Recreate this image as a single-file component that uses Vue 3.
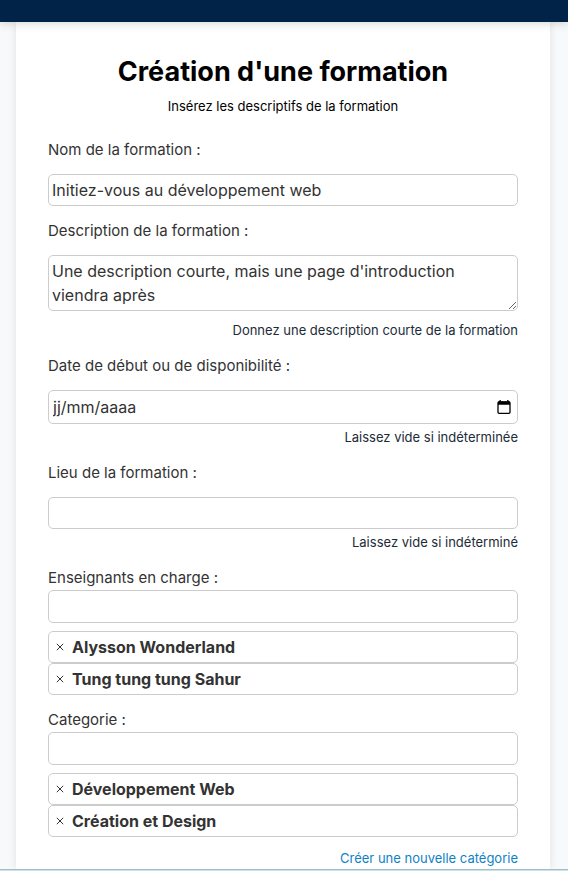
<script setup>
import { ref } from 'vue'

const name = ref('Initiez-vous au développement web')
const description = ref("Une description courte, mais une page d'introduction viendra après")
const date = ref('')
const place = ref('')

const pickers = ref([
  { id: 'teachers', label: 'Enseignants en charge :', query: '', items: ['Alysson Wonderland', 'Tung tung tung Sahur'] },
  { id: 'categories', label: 'Categorie :', query: '', items: ['Développement Web', 'Création et Design'] },
])
</script>

<template>
  <div class="page">
    <header class="topbar"></header>
    <main class="main">
      <form class="card" @submit.prevent>
        <h1>Création d'une formation</h1>
        <p class="intro">Insérez les descriptifs de la formation</p>

        <div class="field">
          <label for="name">Nom de la formation :</label>
          <input id="name" v-model="name" class="control" type="text" />
        </div>

        <div class="field described">
          <label for="description">Description de la formation :</label>
          <textarea id="description" v-model="description" class="control" rows="2"></textarea>
          <p class="hint spaced">Donnez une description courte de la formation</p>
        </div>

        <div class="field described">
          <label for="date">Date de début ou de disponibilité :</label>
          <div class="control date">
            <input id="date" v-model="date" type="text" placeholder="jj/mm/aaaa" />
            <button type="button" aria-label="Ouvrir le calendrier">
              <svg viewBox="0 0 14 14" width="14" height="14">
                <rect x="1" y="2" width="12" height="11.300" rx="1" fill="none" stroke="#000" stroke-width="1.300" />
                <path d="M1 1.500h12v3.300H1zM2.500 0h1.300v2H2.500zM10.200 0h1.300v2h-1.300z" fill="#000" />
              </svg>
            </button>
          </div>
          <p class="hint">Laissez vide si indéterminée</p>
        </div>

        <div class="field described">
          <label for="place">Lieu de la formation :</label>
          <input id="place" v-model="place" class="control" type="text" />
          <p class="hint">Laissez vide si indéterminé</p>
        </div>

        <div v-for="picker in pickers" :key="picker.id" class="field picker">
          <label :for="picker.id">{{ picker.label }}</label>
          <input :id="picker.id" v-model="picker.query" class="control search" type="text" />
          <ul>
            <li v-for="(item, i) in picker.items" :key="item" class="control">
              <button type="button" :aria-label="'Retirer ' + item" @click="picker.items.splice(i, 1)">
                <svg viewBox="0 0 8 8" width="8" height="8">
                  <path d="M.8.800l6.400 6.400M7.200.8L.8 7.200" stroke="#333" stroke-width="1" />
                </svg>
              </button>
              <strong>{{ item }}</strong>
            </li>
          </ul>
        </div>

        <a class="create" href="#">Créer une nouvelle catégorie</a>
      </form>
    </main>
    <footer class="bottom"></footer>
  </div>
</template>

<style>
body {
  margin: 0;
  background: #f8f9fb;
}
</style>

<style scoped>
.page {
  display: flex;
  flex-direction: column;
  min-height: 100vh;
  font-family: Inter, "Liberation Sans", sans-serif;
  font-size: 16px;
  line-height: 24px;
  color: #333;
}
.topbar {
  position: relative;
  z-index: 1;
  height: 22px;
  background: #002347;
  box-shadow: 0 2px 8px rgba(0, 0, 0, 0.15);
}
.main {
  display: flex;
  flex: 1;
  padding: 0 18px 0 16px;
}
.card {
  box-sizing: border-box;
  flex: 1;
  min-width: 0;
  padding: 32px 32px 0;
  background: #fff;
  box-shadow: 0 0 8px rgba(0, 0, 0, 0.1);
}
h1 {
  margin: 0;
  font-size: 27px;
  line-height: 36px;
  font-weight: 700;
  color: #000;
  text-align: center;
}
.intro {
  margin: 6px 0 22px;
  font-size: 13px;
  line-height: 20px;
  color: #000;
  text-align: center;
}
.field {
  display: flex;
  flex-direction: column;
  margin-bottom: 13px;
}
.described {
  margin-bottom: 14px;
}
label {
  margin-bottom: 12px;
  font-size: 15px;
}
.control {
  box-sizing: border-box;
  width: 100%;
  height: 32px;
  margin: 0;
  padding: 3px;
  border: 1px solid #ccc;
  border-radius: 5px;
  background: #fff;
  font: inherit;
  color: inherit;
}
textarea.control {
  height: 56px;
  resize: vertical;
}
.date {
  display: flex;
  align-items: center;
  height: 34px;
  padding: 0 6px 0 4px;
}
.date input {
  flex: 1;
  min-width: 0;
  padding: 0;
  border: 0;
  background: none;
  font: inherit;
  color: inherit;
}
.date input::placeholder {
  color: inherit;
  opacity: 1;
}
button {
  display: flex;
  padding: 0;
  border: 0;
  background: none;
  cursor: pointer;
}
.hint {
  margin: 3px 0 0;
  font-size: 13px;
  line-height: 20px;
  color: #212b38;
  text-align: right;
}
.hint.spaced {
  margin-top: 9px;
}
.picker label {
  margin-bottom: 0;
}
.search {
  height: 33px;
}
ul {
  margin: 8px 0 0;
  padding: 0;
  list-style: none;
}
li {
  display: flex;
  align-items: center;
  gap: 8px;
}
li.control {
  padding: 0 7px;
}
.create {
  display: block;
  margin-top: -2px;
  font-size: 13px;
  line-height: 20px;
  color: #0f82c5;
  text-align: right;
  text-decoration: none;
}
.bottom {
  height: 1px;
  border-top: 1px solid #a5bbc7;
  background: #c9e3eb;
}
</style>
